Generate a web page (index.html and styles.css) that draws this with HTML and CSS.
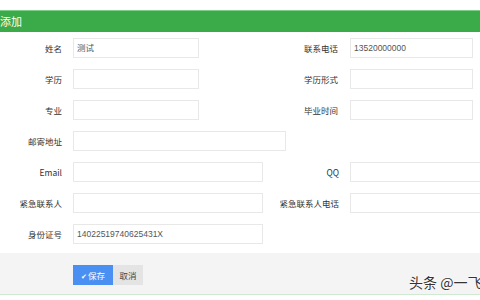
FILE: index.html
```
<!DOCTYPE html>
<html lang="zh">
<head>
<meta charset="utf-8">
<link rel="stylesheet" href="styles.css">
</head>
<body>
<div class="page">
  <div class="titlebar">添加</div>
  <div class="form">
    <div class="row">
      <div class="lbl">姓名</div><div class="inp w126">测试</div>
      <div class="lbl r1">联系电话</div><div class="inp w123">13520000000</div>
    </div>
    <div class="row">
      <div class="lbl">学历</div><div class="inp w126"></div>
      <div class="lbl r1">学历形式</div><div class="inp w123"></div>
    </div>
    <div class="row">
      <div class="lbl">专业</div><div class="inp w126"></div>
      <div class="lbl r1">毕业时间</div><div class="inp w123"></div>
    </div>
    <div class="row">
      <div class="lbl">邮寄地址</div><div class="inp w213"></div>
    </div>
    <div class="row">
      <div class="lbl">Email</div><div class="inp w190"></div>
      <div class="lbl r2">QQ</div><div class="inp wfull"></div>
    </div>
    <div class="row">
      <div class="lbl">紧急联系人</div><div class="inp w190"></div>
      <div class="lbl r2">紧急联系人电话</div><div class="inp wfull"></div>
    </div>
    <div class="row">
      <div class="lbl">身份证号</div><div class="inp w190">14022519740625431X</div>
    </div>
  </div>
  <div class="footer">
    <button class="btn save"><span class="check">✔</span>保存</button><button class="btn cancel">取消</button>
  </div>
  <div class="watermark">头条 @一飞</div>
</div>
</body>
</html>
```
FILE: styles.css
```
html, body {
  margin: 0;
  padding: 0;
  background: #ffffff;
}
body {
  font-family: "Noto Sans CJK SC", "Liberation Sans", sans-serif;
  color: #333;
}
.page {
  position: relative;
  width: 480px;
  height: 300px;
  overflow: hidden;
  padding-top: 10px;
  box-sizing: border-box;
}
.titlebar {
  height: 22px;
  background: #3aab48;
  border-top: 1px solid #7ccf86;
  box-sizing: border-box;
  color: #fff;
  font-size: 11px;
  line-height: 20px;
  padding-left: 0;
}
.form {
  padding-top: 6px;
}
.row {
  display: flex;
  align-items: center;
  height: 20px;
  margin-bottom: 11px;
}
.row:last-child {
  margin-bottom: 0;
}
.lbl {
  width: 62px;
  flex: none;
  text-align: right;
  font-size: 8.5px;
  color: #333;
  margin-right: 11px;
  white-space: nowrap;
}
.lbl.r1 {
  width: 139px;
  margin-left: 0;
  margin-right: 12px;
}
.lbl.r2 {
  width: 76px;
  margin-right: 11px;
}
.inp {
  flex: none;
  height: 20px;
  box-sizing: border-box;
  border: 1px solid #e8e8e8;
  background: #fff;
  font-family: "Liberation Sans", "Noto Sans CJK SC", sans-serif;
  font-size: 8.5px;
  line-height: 18px;
  color: #555;
  padding-left: 3px;
}
.w126 { width: 126px; }
.w123 { width: 123px; }
.w213 { width: 213px; }
.w190 { width: 190px; }
.wfull { width: 140px; }
.footer {
  margin-top: 9px;
  height: 42px;
  background: #f4f4f4;
  border-bottom: 1px solid #cfe9d2;
  padding: 12px 0 0 73px;
  box-sizing: border-box;
  display: flex;
  align-items: flex-start;
}
.btn {
  height: 20px;
  border: none;
  margin: 0;
  padding: 0;
  font-family: "Noto Sans CJK SC", sans-serif;
  font-size: 8.5px;
  line-height: 20px;
  cursor: pointer;
}
.save {
  width: 40px;
  background: #4a8ff2;
  color: #fff;
}
.check {
  font-family: "DejaVu Sans", sans-serif;
  font-size: 7px;
  margin-right: 1px;
}
.cancel {
  width: 30px;
  background: #e4e4e4;
  color: #444;
}
.watermark {
  position: absolute;
  left: 409px;
  top: 273px;
  font-family: "Noto Sans CJK SC", sans-serif;
  font-size: 14px;
  line-height: 18px;
  color: #333;
  white-space: nowrap;
  text-shadow: 0 0 2px #fff, 0 0 2px #fff;
}
```
